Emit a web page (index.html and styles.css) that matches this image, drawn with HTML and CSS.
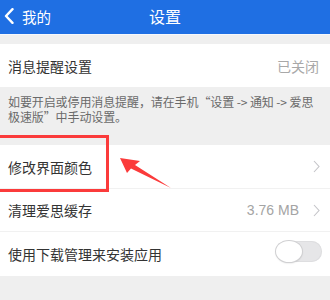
FILE: index.html
```html
<!DOCTYPE html>
<html lang="zh">
<head>
<meta charset="utf-8">
<link rel="stylesheet" href="styles.css">
</head>
<body>
<div class="page">
  <header class="nav">
    <div class="back">
      <svg width="10" height="16" viewBox="0 0 10 16"><path d="M8.5 1.2 L2 8 L8.5 14.8" fill="none" stroke="#fff" stroke-width="2.4" stroke-linecap="round" stroke-linejoin="round"/></svg>
      <span>我的</span>
    </div>
    <div class="title">设置</div>
  </header>

  <section class="group first">
    <div class="row">
      <span class="label">消息提醒设置</span>
      <span class="value">已关闭</span>
    </div>
  </section>

  <p class="hint">如要开启或停用消息提醒，请在手机“设置 -&gt; 通知 -&gt; 爱思极速版”中手动设置。</p>

  <section class="group">
    <div class="row tall">
      <span class="label">修改界面颜色</span>
      <span class="chev"><svg width="7" height="13" viewBox="0 0 7 13"><path d="M1 1 L6 6.5 L1 12" fill="none" stroke="#c4c4c8" stroke-width="1.1"/></svg></span>
    </div>
    <div class="row">
      <span class="label">清理爱思缓存</span>
      <span class="value with-chev">3.76 MB</span>
      <span class="chev"><svg width="7" height="13" viewBox="0 0 7 13"><path d="M1 1 L6 6.5 L1 12" fill="none" stroke="#c4c4c8" stroke-width="1.1"/></svg></span>
    </div>
    <div class="row tall">
      <span class="label">使用下载管理来安装应用</span>
      <span class="toggle"><span class="knob"></span></span>
    </div>
  </section>

  <div class="mark-box"></div>
  <svg class="mark-arrow" width="330" height="300" viewBox="0 0 330 300">
    <polygon points="120,158 140,161 135,165 171,188 131,168.5 127,173" fill="#fb3b3b"/>
  </svg>
</div>
</body>
</html>
```

FILE: styles.css
```css
html, body {
  margin: 0;
  padding: 0;
}
body {
  background: #efefef;
  font-family: "Noto Sans CJK SC", "Noto Sans", sans-serif;
  color: #333;
  width: 330px;
  height: 300px;
  overflow: hidden;
}
.page {
  position: relative;
  width: 330px;
  height: 300px;
}
.nav {
  height: 34px;
  background: #1f6fe3;
  border-bottom: 1px solid #f6f8fc;
  display: grid;
  grid-template-columns: 1fr auto 1fr;
  align-items: center;
  color: #fff;
}
.back {
  display: flex;
  align-items: center;
  gap: 8px;
  padding-left: 4px;
  font-size: 14.5px;
  margin-top: -2px;
}
.title {
  font-size: 16px;
  margin-top: -3px;
}
.group {
  background: #fff;
}
.group.first {
  margin-top: 9px;
}
.row {
  height: 43px;
  display: flex;
  align-items: center;
  padding: 0 11px 0 8px;
  font-size: 14px;
  border-bottom: 1px solid #f1f1f1;
  box-sizing: border-box;
}
.row.tall {
  height: 44px;
}
.row:last-child {
  border-bottom: none;
}
.group.first .row {
  border-bottom: none;
}
.label {
  flex: 1;
  color: #333;
}
.value {
  color: #a4a4a4;
  font-size: 14px;
  font-family: "Liberation Sans", "Noto Sans CJK SC", sans-serif;
}
.group.first .value {
  font-family: "Noto Sans CJK SC", sans-serif;
  color: #a8a8a8;
}
.with-chev {
  margin-right: 14px;
}
.chev {
  display: flex;
  align-items: center;
  margin-right: -1px;
}
.hint {
  margin: 0;
  height: 58px;
  box-sizing: border-box;
  padding: 7px 10px 0 8px;
  font-size: 12px;
  line-height: 15px;
  color: #6a6a6a;
  letter-spacing: -0.1px;
}
.toggle {
  width: 46px;
  height: 21px;
  border-radius: 11px;
  background: #e6e6e8;
  box-shadow: inset 0 0 0 1px #dedee0;
  position: relative;
  margin-right: -3px;
  margin-top: -5px;
}
.knob {
  position: absolute;
  left: 0;
  top: 0;
  width: 26px;
  height: 21px;
  border-radius: 50%;
  background: #fff;
  box-shadow: 0 0 0 1px #d0d0d2, 0 1px 2px rgba(0,0,0,0.18);
}
.mark-box {
  position: absolute;
  left: -4px;
  top: 135px;
  width: 107px;
  height: 51px;
  border: 3px solid #fb3b3b;
}
.mark-arrow {
  position: absolute;
  left: 0;
  top: 0;
  pointer-events: none;
}
```
